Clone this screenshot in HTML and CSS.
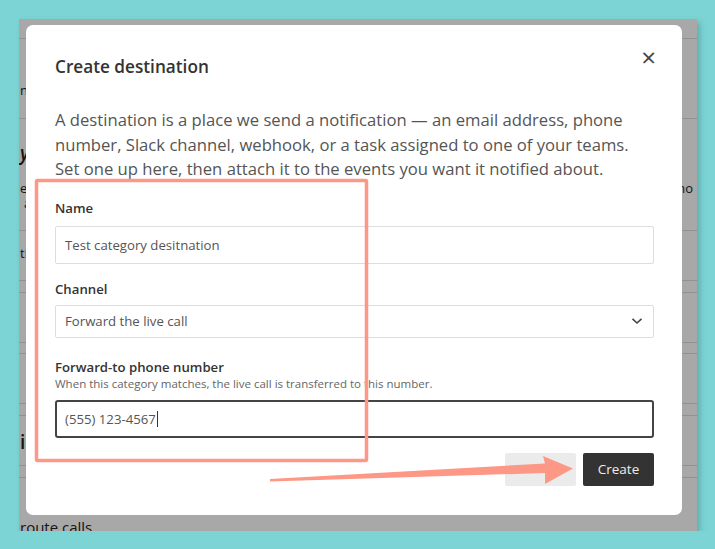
FILE: index.html
```html
<!DOCTYPE html>
<html lang="en">
<head>
  <meta charset="UTF-8">
  <title>Create destination</title>
  <link rel="stylesheet" href="styles.css">
</head>
<body>

  <div class="shot">
    <!-- page behind the dialog, only its edges show -->
    <div class="page">
      <div class="row r1"></div>
      <div class="row r2"><span class="frag">n</span></div>
      <div class="row r3">
        <span class="frag big">y</span>
        <div class="pair">
          <span class="frag">e</span>
          <span class="frag">no</span>
        </div>
        <span class="frag small">a</span>
      </div>
      <div class="row r4"><span class="frag">ti</span></div>
      <div class="row r5"></div>
      <div class="row r6"></div>
      <div class="row r5 thin"></div>
      <div class="row r6"></div>
      <div class="row r5"></div>
      <div class="row r7"><span class="frag big">ir</span></div>
      <div class="row r5"></div>
      <div class="row r8"><span class="foot">route calls</span></div>
    </div>

    <div class="overlay"></div>

    <!-- dialog -->
    <div class="modal">
      <div class="modal-head">
        <h2>Create destination</h2>
        <span class="close">&times;</span>
      </div>

      <p class="intro">A destination is a place we send a notification — an email address, phone number, Slack channel, webhook, or a task assigned to one of your teams. Set one up here, then attach it to the events you want it notified about.</p>

      <label class="lbl">Name</label>
      <div class="field name">Test category desitnation</div>

      <label class="lbl">Channel</label>
      <div class="field select">
        <span>Forward the live call</span>
        <svg width="12" height="8" viewBox="0 0 12 8"><path d="M1.5 1.8 L6 6 L10.5 1.8" fill="none" stroke="#444" stroke-width="1.6"/></svg>
      </div>

      <label class="lbl">Forward-to phone number</label>
      <div class="hint">When this category matches, the live call is transferred to this number.</div>
      <div class="field phone">(555) 123-4567<span class="caret"></span></div>

      <div class="actions">
        <button class="btn cancel">Cancel</button>
        <button class="btn create">Create</button>
      </div>
    </div>
  </div>

  <!-- annotation drawn over the screenshot -->
  <svg class="marks" width="715" height="549" viewBox="0 0 715 549">
    <rect x="36.5" y="180.5" width="330" height="280" fill="none" stroke="#fd9886" stroke-width="3.5" rx="1"/>
    <polygon points="270,479 545,463.5 543,456 573,468.5 545,484 545,473 270,481.5" fill="#fd9886"/>
  </svg>

</body>
</html>
```

FILE: styles.css
```css
body {
  margin: 0;
  background: #7dd4d4;
  font-family: "Open Sans", "Noto Sans", sans-serif;
  color: #444;
}

.shot {
  position: relative;
  width: 678px;
  height: 512px;
  margin: 19px 0 0 19px;
  overflow: hidden;
  background: #fff;
  box-shadow: 3px 3px 6px rgba(0, 60, 60, 0.25);
}

/* page behind */
.page {
  font-size: 13px;
  line-height: 16px;
  color: #222;
}
.row {
  border-bottom: 1px solid #ddd;
  box-sizing: border-box;
  padding-left: 1px;
}
.r1 { height: 20px; }
.r2 { height: 80px; padding-top: 43px; }
.r3 { height: 112px; padding-top: 23px; }
.r4 { height: 50px; padding-top: 14px; }
.r5 { height: 12px; }
.r5.thin { height: 11px; }
.r6 { height: 50px; }
.r7 { height: 50px; padding-top: 15px; }
.r8 { height: 60px; border: 0; padding-top: 40px; }
.frag {
  display: block;
}
.frag.big {
  font-size: 19px;
  line-height: 22px;
  font-weight: 600;
  font-style: italic;
}
.r7 .frag.big {
  font-style: normal;
}
.frag.small {
  font-size: 12px;
  padding-left: 4px;
}
.pair {
  display: flex;
  justify-content: space-between;
  margin-top: 16px;
  padding-right: 4px;
}
.foot {
  display: block;
  font-size: 15px;
  line-height: 18px;
}

.overlay {
  position: absolute;
  inset: 0;
  background: rgba(0, 0, 0, 0.34);
}

/* dialog */
.modal {
  position: absolute;
  left: 7px;
  top: 6px;
  width: 656px;
  height: 490px;
  box-sizing: border-box;
  padding: 29px 28px 28px 29px;
  background: #fff;
  border-radius: 7px;
}

.modal-head {
  display: flex;
  justify-content: space-between;
  align-items: center;
  height: 24px;
}
.modal-head h2 {
  margin: 0;
  font-size: 17.2px;
  font-weight: 600;
  color: #333;
}
.close {
  font-size: 26px;
  line-height: 1;
  color: #444;
  margin: -18px -2px 0 0;
}

.intro {
  max-width: 585px;
  margin: 30px 0 17px;
  font-size: 16.65px;
  line-height: 24.5px;
  color: #555;
}

.lbl {
  display: block;
  font-size: 13.2px;
  font-weight: 600;
  line-height: 18px;
  color: #333;
}

.field {
  box-sizing: border-box;
  display: flex;
  align-items: center;
  margin: 9px 0 16px;
  padding: 0 9px;
  height: 38px;
  border: 1px solid #ddd;
  border-radius: 2px;
  font-size: 13.2px;
  color: #555;
}
.field.select {
  height: 33px;
  justify-content: space-between;
  margin: 7px 0 20px;
}
.field.select svg {
  margin-right: 1px;
}
.hint {
  font-size: 11.5px;
  color: #666;
  line-height: 16px;
}
.field.phone {
  height: 38px;
  margin: 8px 0 15px;
  border: 2px solid #444;
  border-radius: 3px;
  padding-left: 8px;
}
.caret {
  display: inline-block;
  width: 1px;
  height: 16px;
  margin-left: 1px;
  background: #333;
}

.actions {
  display: flex;
  justify-content: flex-end;
  gap: 7px;
}
.btn {
  width: 71px;
  height: 33px;
  border: 0;
  border-radius: 2px;
  font-family: inherit;
  font-size: 13.5px;
}
.cancel {
  background: #ebebeb;
  color: #ebebeb;
}
.create {
  background: #333;
  color: #eee;
}

.marks {
  position: absolute;
  left: 0;
  top: 0;
  pointer-events: none;
}
```
